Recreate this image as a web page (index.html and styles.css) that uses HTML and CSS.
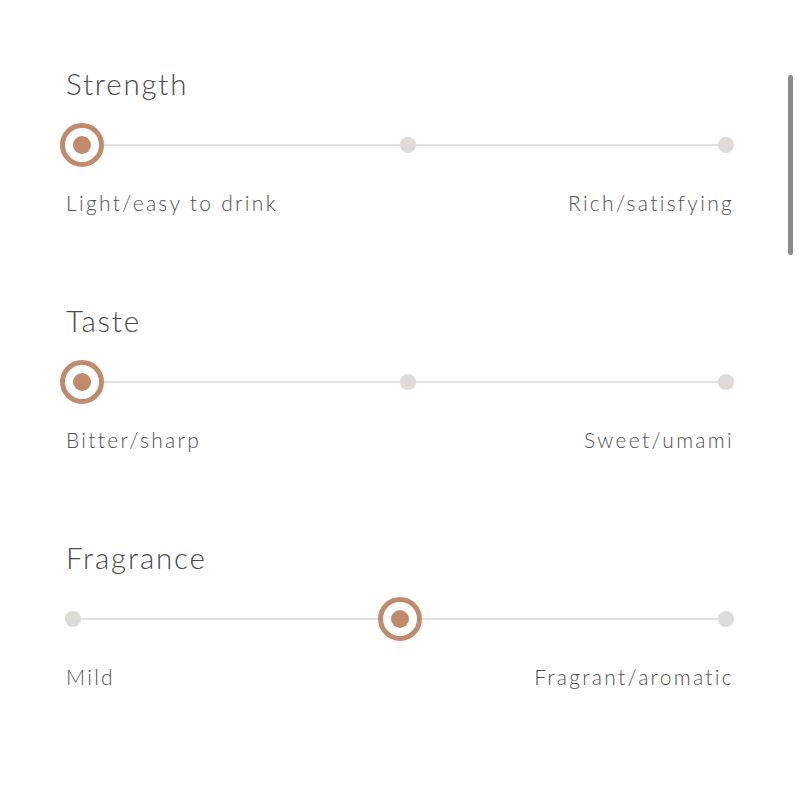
FILE: index.html
```html
<!DOCTYPE html>
<html>
<head>
<meta charset="utf-8">
<link rel="stylesheet" href="styles.css">
</head>
<body>
<div class="page">
  <section class="attr">
    <h2 class="title">Strength</h2>
    <div class="slider">
      <div class="track"></div>
      <span class="dot p1"></span>
      <span class="dot p2"></span>
      <span class="thumb t0"></span>
    </div>
    <div class="labels"><span>Light/easy to drink</span><span>Rich/satisfying</span></div>
  </section>
  <section class="attr">
    <h2 class="title">Taste</h2>
    <div class="slider">
      <div class="track"></div>
      <span class="dot p1"></span>
      <span class="dot p2"></span>
      <span class="thumb t0"></span>
    </div>
    <div class="labels"><span>Bitter/sharp</span><span>Sweet/umami</span></div>
  </section>
  <section class="attr">
    <h2 class="title">Fragrance</h2>
    <div class="slider">
      <div class="track"></div>
      <span class="dot p0"></span>
      <span class="dot p2"></span>
      <span class="thumb t1"></span>
    </div>
    <div class="labels"><span>Mild</span><span>Fragrant/aromatic</span></div>
  </section>
  <div class="scrollbar"></div>
</div>
</body>
</html>
```
FILE: styles.css
```css
html, body {
  margin: 0;
  padding: 0;
  background: #ffffff;
}
.page {
  width: 800px;
  height: 800px;
  box-sizing: border-box;
  padding: 66px 66px 0 66px;
  font-family: Lato, "Noto Sans", sans-serif;
  font-weight: 300;
  color: #545454;
  position: relative;
}
.attr {
  height: 237px;
}
.title {
  margin: 0;
  font-size: 29.5px;
  line-height: 36px;
  font-weight: 300;
  letter-spacing: 1.8px;
  color: #4a4a4a;
}
.slider {
  position: relative;
  height: 44px;
  margin: 21px 0 0 -6px;
  width: 674px;
}
.track {
  position: absolute;
  left: 13px;
  right: 8px;
  top: 21px;
  height: 2px;
  background: #e3dfdc;
}
.dot {
  position: absolute;
  top: 14px;
  width: 16px;
  height: 16px;
  margin-left: -8px;
  border-radius: 50%;
  background: #dedad6;
}
.p0 { left: 13px; }
.p1 { left: 348px; }
.p2 { left: 666px; }
.thumb {
  position: absolute;
  top: 0;
  width: 44px;
  height: 44px;
  margin-left: -22px;
  box-sizing: border-box;
  border: 5px solid #c28a6d;
  border-radius: 50%;
  background: #ffffff;
  display: flex;
  align-items: center;
  justify-content: center;
}
.thumb::after {
  content: "";
  width: 18px;
  height: 18px;
  border-radius: 50%;
  background: #c28a6d;
}
.t0 { left: 22px; }
.t1 { left: 340px; }
.labels {
  display: flex;
  justify-content: space-between;
  margin-top: 22px;
  font-size: 21px;
  line-height: 28px;
  letter-spacing: 2.3px;
  color: #4f4f4f;
}
.scrollbar {
  position: absolute;
  right: 7px;
  top: 75px;
  width: 5px;
  height: 180px;
  border-radius: 3px;
  background: #8a8a8a;
}
```
